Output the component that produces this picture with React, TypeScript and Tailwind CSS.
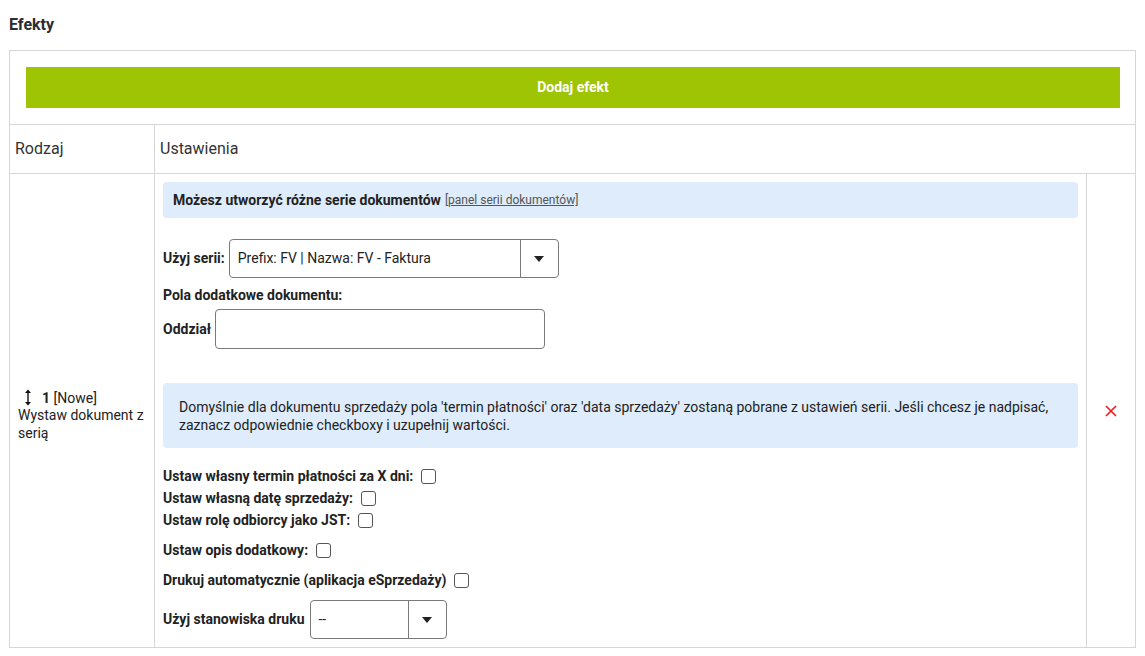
import React from "react";

const font = { fontFamily: "Roboto, 'Noto Sans', sans-serif" };

function Caret() {
  return (
    <svg width="10" height="6" viewBox="0 0 10 6" className="block">
      <path d="M0 0h10L5 6z" fill="#222" />
    </svg>
  );
}

function SelectBox({ value, width, split }: { value: string; width: number; split: number }) {
  return (
    <div
      className="flex h-[39px] rounded-[4px] border border-[#7a7a7a] bg-white"
      style={{ width }}
    >
      <div className="flex items-center border-r border-[#7a7a7a] pl-[8px] text-[14px] text-[#222]" style={{ width: split }}>
        {value}
      </div>
      <div className="flex flex-1 items-center justify-center">
        <Caret />
      </div>
    </div>
  );
}

function Check({ label, className = "" }: { label: string; className?: string }) {
  return (
    <div className={`flex items-center gap-[8px] ${className}`}>
      <span className="text-[14px] font-bold leading-[17px] text-[#222]">{label}</span>
      <span className="h-[15px] w-[15px] rounded-[3px] border border-[#555] bg-white" />
    </div>
  );
}

function SortArrow() {
  return (
    <svg width="8" height="17" viewBox="0 0 8 17" className="inline-block align-[-3px]">
      <path d="M4 2v13" stroke="#111" strokeWidth="1.4" />
      <path d="M1 4L4 0.5 7 4z" fill="#111" />
      <path d="M1 13l3 3.5 3-3.5z" fill="#111" />
    </svg>
  );
}

export default function App() {
  return (
    <div className="min-h-screen bg-white pl-[9px] pt-[15px] text-[#222]" style={font}>
      <h2 className="mb-[15px] text-[16px] font-bold leading-[20px] text-[#2b2b33]">Efekty</h2>

      <table className="w-[1126px] table-fixed border border-[#d6d6d6]">
        <colgroup>
          <col className="w-[145px]" />
          <col className="w-[932px]" />
          <col className="w-[49px]" />
        </colgroup>
        <tbody>
          <tr className="border-b border-[#d6d6d6]">
            <td colSpan={3} className="pb-[16px] pl-[16px] pr-[15px] pt-[16px]">
              <button className="flex h-[41px] w-full items-center justify-center bg-[#9ec404] text-[14px] font-bold text-white">
                Dodaj efekt
              </button>
            </td>
          </tr>

          <tr className="border-b border-[#d6d6d6]">
            <td className="h-[49px] border-r border-[#d6d6d6] pl-[5px] align-middle text-[16px] text-[#333]">Rodzaj</td>
            <td colSpan={2} className="h-[49px] pl-[5px] align-middle text-[16px] text-[#333]">Ustawienia</td>
          </tr>

          <tr>
            <td className="border-r border-[#d6d6d6] pl-[8px] pr-[4px] pt-[10px] align-middle text-[14px] leading-[17.5px] text-[#222]">
              <div>
                <span className="ml-[6px] mr-[10px]">
                  <SortArrow />
                </span>
                <b>1</b> [Nowe]
              </div>
              <div>Wystaw dokument z serią</div>
            </td>

            <td className="border-r border-[#d6d6d6] p-[8px] align-top">
              <div className="flex h-[36px] items-center rounded-[4px] bg-[#deecfc] px-[10px]">
                <span className="text-[14px] font-bold">Możesz utworzyć różne serie dokumentów</span>
                <a className="ml-[4px] text-[12px] text-[#555] underline">[panel serii dokumentów]</a>
              </div>

              <div className="mt-[21px] flex items-center gap-[4px]">
                <span className="text-[14px] font-bold">Użyj serii:</span>
                <SelectBox value="Prefix: FV | Nazwa: FV - Faktura" width={330} split={291} />
              </div>

              <div className="mt-[9px] text-[14px] font-bold leading-[17px]">Pola dodatkowe dokumentu:</div>

              <div className="mt-[5px] flex items-center gap-[4px]">
                <span className="text-[14px] font-bold">Oddział</span>
                <div className="h-[40px] w-[330px] rounded-[4px] border border-[#7a7a7a]" />
              </div>

              <div className="mt-[34px] rounded-[4px] bg-[#deecfc] pb-[14px] pl-[16px] pr-[16px] pt-[15px] text-[14px] leading-[18px]">
                Domyślnie dla dokumentu sprzedaży pola 'termin płatności' oraz 'data sprzedaży' zostaną pobrane z
                ustawień serii. Jeśli chcesz je nadpisać, zaznacz odpowiednie checkboxy i uzupełnij wartości.
              </div>

              <Check label="Ustaw własny termin płatności za X dni:" className="mt-[20px]" />
              <Check label="Ustaw własną datę sprzedaży:" className="mt-[5px]" />
              <Check label="Ustaw rolę odbiorcy jako JST:" className="mt-[5px]" />
              <Check label="Ustaw opis dodatkowy:" className="mt-[13px]" />
              <Check label="Drukuj automatycznie (aplikacja eSprzedaży)" className="mt-[13px]" />

              <div className="mt-[11px] flex items-center gap-[5px]">
                <span className="text-[14px] font-bold">Użyj stanowiska druku</span>
                <SelectBox value="--" width={137} split={98} />
              </div>
            </td>

            <td className="align-middle">
              <div className="flex justify-center">
                <svg width="12" height="12" viewBox="0 0 12 12">
                  <path d="M1 1l10 10M11 1L1 11" stroke="#f21818" strokeWidth="1.6" />
                </svg>
              </div>
            </td>
          </tr>
        </tbody>
      </table>
    </div>
  );
}
